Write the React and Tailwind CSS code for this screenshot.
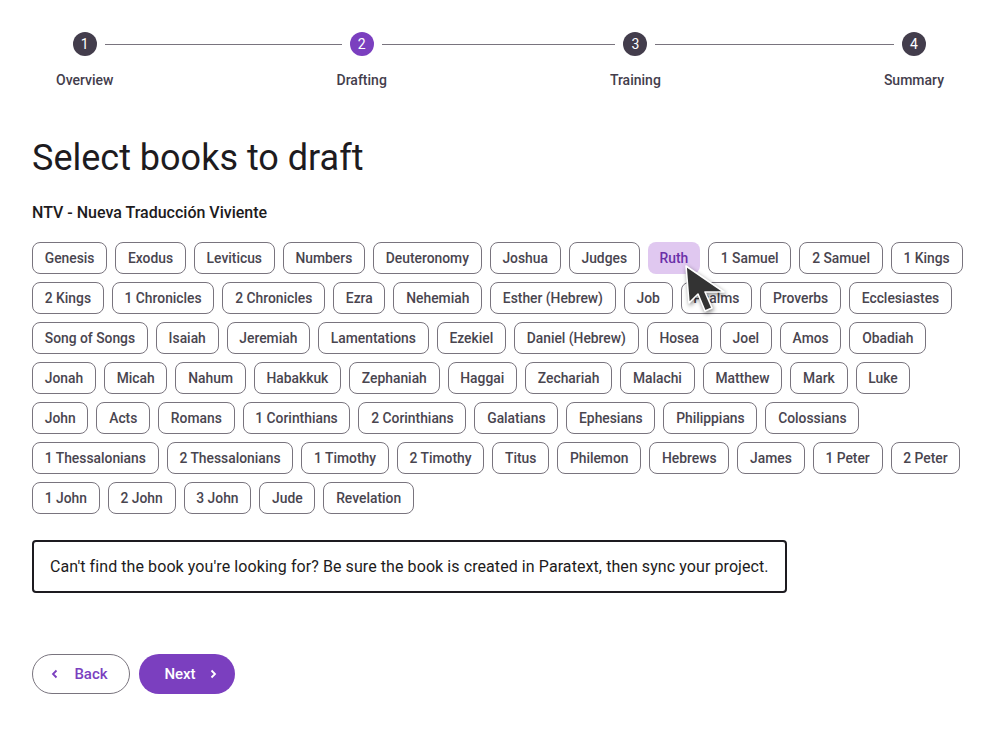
import React from "react";

const steps = [
  { n: 1, label: "Overview", active: false },
  { n: 2, label: "Drafting", active: true },
  { n: 3, label: "Training", active: false },
  { n: 4, label: "Summary", active: false },
];

const books = [
  "Genesis", "Exodus", "Leviticus", "Numbers", "Deuteronomy", "Joshua", "Judges", "Ruth", "1 Samuel", "2 Samuel", "1 Kings",
  "2 Kings", "1 Chronicles", "2 Chronicles", "Ezra", "Nehemiah", "Esther (Hebrew)", "Job", "Psalms", "Proverbs", "Ecclesiastes",
  "Song of Songs", "Isaiah", "Jeremiah", "Lamentations", "Ezekiel", "Daniel (Hebrew)", "Hosea", "Joel", "Amos", "Obadiah",
  "Jonah", "Micah", "Nahum", "Habakkuk", "Zephaniah", "Haggai", "Zechariah", "Malachi", "Matthew", "Mark", "Luke",
  "John", "Acts", "Romans", "1 Corinthians", "2 Corinthians", "Galatians", "Ephesians", "Philippians", "Colossians",
  "1 Thessalonians", "2 Thessalonians", "1 Timothy", "2 Timothy", "Titus", "Philemon", "Hebrews", "James", "1 Peter", "2 Peter",
  "1 John", "2 John", "3 John", "Jude", "Revelation",
];

function Step({ step, first, last }) {
  return (
    <div className="flex flex-col items-stretch">
      <div className="flex items-center h-6">
        <div className={`flex-1 h-px mr-2 ${first ? "bg-transparent" : "bg-[#79747e]"}`} />
        <div
          className={`w-6 h-6 rounded-full flex items-center justify-center text-white text-[14px] ${
            step.active ? "bg-[#7b3fbf]" : "bg-[#433d4c]"
          }`}
        >
          {step.n}
        </div>
        <div className={`flex-1 h-px ml-2 ${last ? "bg-transparent" : "bg-[#79747e]"}`} />
      </div>
      <div className="px-6 mt-[14px] text-[14px] leading-5 font-medium text-[#433d4c] text-center">
        {step.label}
      </div>
    </div>
  );
}

function Cursor() {
  return (
    <svg
      className="absolute left-[682px] top-[262px] pointer-events-none"
      width="48"
      height="56"
      viewBox="-2 -2 48 56"
      style={{ filter: "drop-shadow(1px 2px 2px rgba(0,0,0,0.45))" }}
    >
      <path
        d="M2 2 L5 39 L14 30 L21 47 L28 44 L21 28 L40 28 Z"
        fill="#333333"
        stroke="#ffffff"
        strokeWidth="1.6"
        strokeLinejoin="round"
      />
    </svg>
  );
}

export default function App() {
  return (
    <div
      className="relative w-[1000px] h-[736px] bg-white px-8 pt-8"
      style={{ fontFamily: "Roboto, 'Noto Sans', sans-serif" }}
    >
      {/* stepper */}
      <div className="flex items-start">
        {steps.map((s, i) => (
          <React.Fragment key={s.n}>
            <Step step={s} first={i === 0} last={i === steps.length - 1} />
            {i < steps.length - 1 && <div className="flex-1 h-px bg-[#79747e] mt-3" />}
          </React.Fragment>
        ))}
      </div>

      <h1 className="mt-[46px] text-[36px] leading-[44px] text-[#1d1b20] font-normal">Select books to draft</h1>

      <div className="mt-[23px] text-[16px] leading-5 font-medium text-[#1d1b20]">NTV - Nueva Traducción Viviente</div>

      <div className="mt-[19px] flex flex-wrap gap-2">
        {books.map((b) =>
          b === "Ruth" ? (
            <div
              key={b}
              className="h-8 px-[11.75px] rounded-lg bg-[#e0c8f0] text-[#6b2fa8] text-[13.85px] font-medium flex items-center"
            >
              {b}
            </div>
          ) : (
            <div
              key={b}
              className="h-8 px-[11.75px] rounded-lg border border-[#79747e] text-[#49454f] text-[13.85px] font-medium flex items-center"
            >
              {b}
            </div>
          )
        )}
      </div>

      <div className="mt-[26px] w-fit border-2 border-[#1d1b20] rounded px-4 py-[15px] text-[16px] leading-[19px] tracking-[0.08px] text-[#1d1b20]">
        Can't find the book you're looking for? Be sure the book is created in Paratext, then sync your project.
      </div>

      <div className="mt-[61px] flex">
        <button className="h-10 w-[98px] rounded-full border border-[#79747e] flex items-center justify-center gap-[14px] text-[#7b3fbf] text-[15px] font-medium">
          <svg width="10" height="10" viewBox="0 0 10 10" className="ml-1">
            <path d="M6.5 1.5 L3 5 L6.5 8.5" fill="none" stroke="#7b3fbf" strokeWidth="1.8" />
          </svg>
          <span className="pr-2">Back</span>
        </button>
        <button className="ml-[9px] h-10 w-[96px] rounded-full bg-[#7b3fbf] flex items-center justify-center gap-[12px] text-white text-[15px] font-medium">
          <span className="pl-2">Next</span>
          <svg width="10" height="10" viewBox="0 0 10 10">
            <path d="M3.5 1.5 L7 5 L3.5 8.5" fill="none" stroke="#ffffff" strokeWidth="1.8" />
          </svg>
        </button>
      </div>

      <Cursor />
    </div>
  );
}
